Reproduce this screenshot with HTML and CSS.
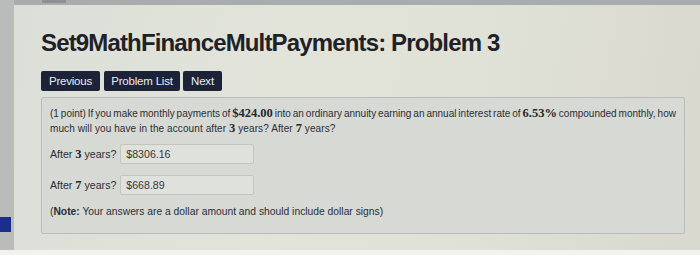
FILE: index.html
```html
<!DOCTYPE html>
<html>
<head>
<meta charset="utf-8">
<link rel="stylesheet" href="styles.css">
</head>
<body>
<div class="screen">
  <div class="side">
    <div class="side-mark"></div>
  </div>
  <div class="main">
    <div class="topbar"><div class="top-tab"></div></div>
    <h1 class="title">Set9MathFinanceMultPayments: Problem 3</h1>
    <div class="nav">
      <span class="btn btn-prev">Previous</span>
      <span class="btn btn-list">Problem List</span>
      <span class="btn btn-next">Next</span>
    </div>
    <div class="problem">
      <p class="q"><span class="l1">(1 point) If you make monthly payments of <b class="m">$424.00</b> into an ordinary annuity earning an annual interest rate of <b class="m">6.53%</b> compounded monthly, how</span><br><span class="l2">much will you have in the account after <b class="m">3</b> years? After <b class="m">7</b> years?</span></p>
      <div class="row row1">
        <span class="lbl">After <b class="m">3</b> years?</span>
        <span class="inp inp1">$8306.16</span>
      </div>
      <div class="row row2">
        <span class="lbl">After <b class="m">7</b> years?</span>
        <span class="inp inp2">$668.89</span>
      </div>
      <p class="note">(<b>Note:</b> Your answers are a dollar amount and should include dollar signs)</p>
    </div>
  </div>
</div>
</body>
</html>
```
FILE: styles.css
```css
html, body {
  margin: 0;
  padding: 0;
  width: 700px;
  height: 255px;
  overflow: hidden;
}
body {
  background: #f2f2ee;
  font-family: "Liberation Sans", Arial, sans-serif;
  color: #2a2d33;
}
.screen {
  display: flex;
  height: 250px;
}
.side {
  width: 14px;
  flex: none;
  background: #b9bcbb;
  display: flex;
  flex-direction: column;
  padding-top: 217px;
  box-sizing: border-box;
}
.side-mark {
  width: 11px;
  height: 15px;
  background: #1b2e8c;
}
.main {
  flex: 1;
  background: linear-gradient(100deg, #dcdfd8 0%, #e2e4da 40%, #dfe0d6 70%, #d8d8cf 100%);
  padding-left: 27px;
  padding-right: 14px;
}
.topbar {
  height: 5px;
  margin-left: -27px;
  margin-right: -14px;
  background: #a9acad;
  padding-left: 28px;
}
.top-tab {
  width: 24px;
  height: 3px;
  background: #8c9092;
}
.title {
  margin: 26px 0 0 0;
  font-size: 24px;
  line-height: 24px;
  font-weight: bold;
  color: #1e2126;
  letter-spacing: -0.85px;
  height: 24px;
}
.nav {
  display: flex;
  gap: 4px;
  margin-top: 16px;
}
.btn {
  display: flex;
  align-items: center;
  justify-content: center;
  height: 20px;
  background: #1c2338;
  color: #e8ecf2;
  font-size: 11.5px;
  border-radius: 2px;
  letter-spacing: -0.2px;
}
.btn-prev { width: 59px; }
.btn-list { width: 76px; }
.btn-next { width: 39px; margin-left: -1px; }
.problem {
  margin-top: 6px;
  width: 644px;
  height: 137px;
  box-sizing: border-box;
  border: 1px solid #b9bcba;
  border-radius: 2px;
  background: #d6d9d4;
  padding: 8px 4px 0 8px;
  font-size: 10.6px;
  color: #2b2e34;
}
.q {
  margin: 0;
  line-height: 15px;
  font-size: 10px;
  white-space: nowrap;
}
.l1 {
  word-spacing: -0.85px;
}
.l2 {
  word-spacing: 0;
  letter-spacing: 0.1px;
}
.m {
  font-family: "Liberation Serif", "Times New Roman", serif;
  font-size: 12.5px;
  line-height: 10px;
  font-weight: bold;
  color: #25282d;
  word-spacing: 0;
  letter-spacing: 0;
}
.row {
  display: flex;
  align-items: center;
  height: 20px;
}
.row1 { margin-top: 8px; }
.row2 { margin-top: 11px; }
.lbl {
  white-space: nowrap;
}
.inp {
  margin-left: 4px;
  height: 20px;
  box-sizing: border-box;
  border: 1px solid #c3c6bf;
  border-radius: 2px;
  background: #dfe2dc;
  display: flex;
  align-items: center;
  padding-left: 5px;
  font-size: 10.6px;
  color: #34373c;
}
.inp1 { width: 134px; }
.inp2 { width: 134px; }
.note {
  margin: 10px 0 0 0;
  line-height: 14px;
  font-size: 10.3px;
}
.note b { font-weight: bold; }
```
